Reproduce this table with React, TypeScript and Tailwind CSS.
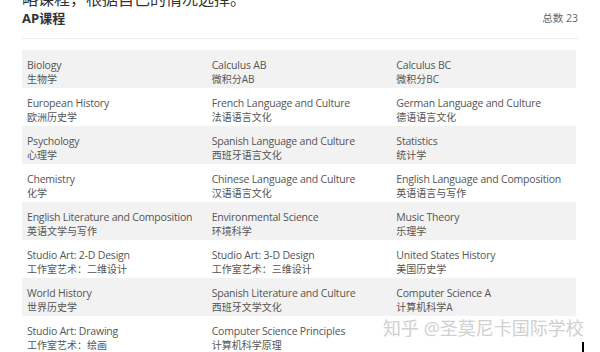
import React from "react";

const courses: [string, string][] = [
  ["Biology", "生物学"],
  ["Calculus AB", "微积分AB"],
  ["Calculus BC", "微积分BC"],
  ["European History", "欧洲历史学"],
  ["French Language and Culture", "法语语言文化"],
  ["German Language and Culture", "德语语言文化"],
  ["Psychology", "心理学"],
  ["Spanish Language and Culture", "西班牙语言文化"],
  ["Statistics", "统计学"],
  ["Chemistry", "化学"],
  ["Chinese Language and Culture", "汉语语言文化"],
  ["English Language and Composition", "英语语言与写作"],
  ["English Literature and Composition", "英语文学与写作"],
  ["Environmental Science", "环境科学"],
  ["Music Theory", "乐理学"],
  ["Studio Art: 2-D Design", "工作室艺术：二维设计"],
  ["Studio Art: 3-D Design", "工作室艺术：三维设计"],
  ["United States History", "美国历史学"],
  ["World History", "世界历史学"],
  ["Spanish Literature and Culture", "西班牙文学文化"],
  ["Computer Science A", "计算机科学A"],
  ["Studio Art: Drawing", "工作室艺术：绘画"],
  ["Computer Science Principles", "计算机科学原理"],
];

const font = { fontFamily: '"Open Sans", "Noto Sans CJK SC", sans-serif' };

export default function App() {
  const rows: [string, string][][] = [];
  for (let i = 0; i < courses.length; i += 3) rows.push(courses.slice(i, i + 3));

  return (
    <div className="relative w-[600px] h-[352px] overflow-hidden bg-white" style={font}>
      <div className="px-[22px]">
        <p className="-mt-[11px] text-[16px] leading-[20px] text-[#333] whitespace-nowrap">略课程，根据自己的情况选择。</p>

        {/* heading */}
        <div className="flex items-center justify-between h-[30px] border-b border-[#efefef] pb-[9px]">
          <h2 className="text-[13px] font-bold text-[#333]">AP课程</h2>
          <span className="text-[10.5px] text-[#666]">总数 23</span>
        </div>

        <div className="mt-[11px] w-[554px]">
          {rows.map((row, r) => (
            <div
              key={r}
              className={`grid grid-cols-3 h-[38px] pt-[9px] ${r % 2 === 0 ? "bg-[#f2f2f2]" : "bg-white"}`}
            >
              {row.map(([en, zh]) => (
                <div key={en} className="pl-[5px] text-[#555] whitespace-nowrap">
                  <div className="text-[10.5px] leading-[13px] tracking-[-0.2px]">{en}</div>
                  <div className="text-[10px] leading-[15px]">{zh}</div>
                </div>
              ))}
            </div>
          ))}
        </div>
      </div>

      {/* watermark */}
      <div className="absolute left-[383px] top-[317px] text-[18px] leading-[22px] text-[#d0d0d0] whitespace-nowrap">
        知乎 @圣莫尼卡国际学校
      </div>
      <div className="absolute left-[582px] top-[342px] w-[2px] h-[10px] bg-black" />
    </div>
  );
}
